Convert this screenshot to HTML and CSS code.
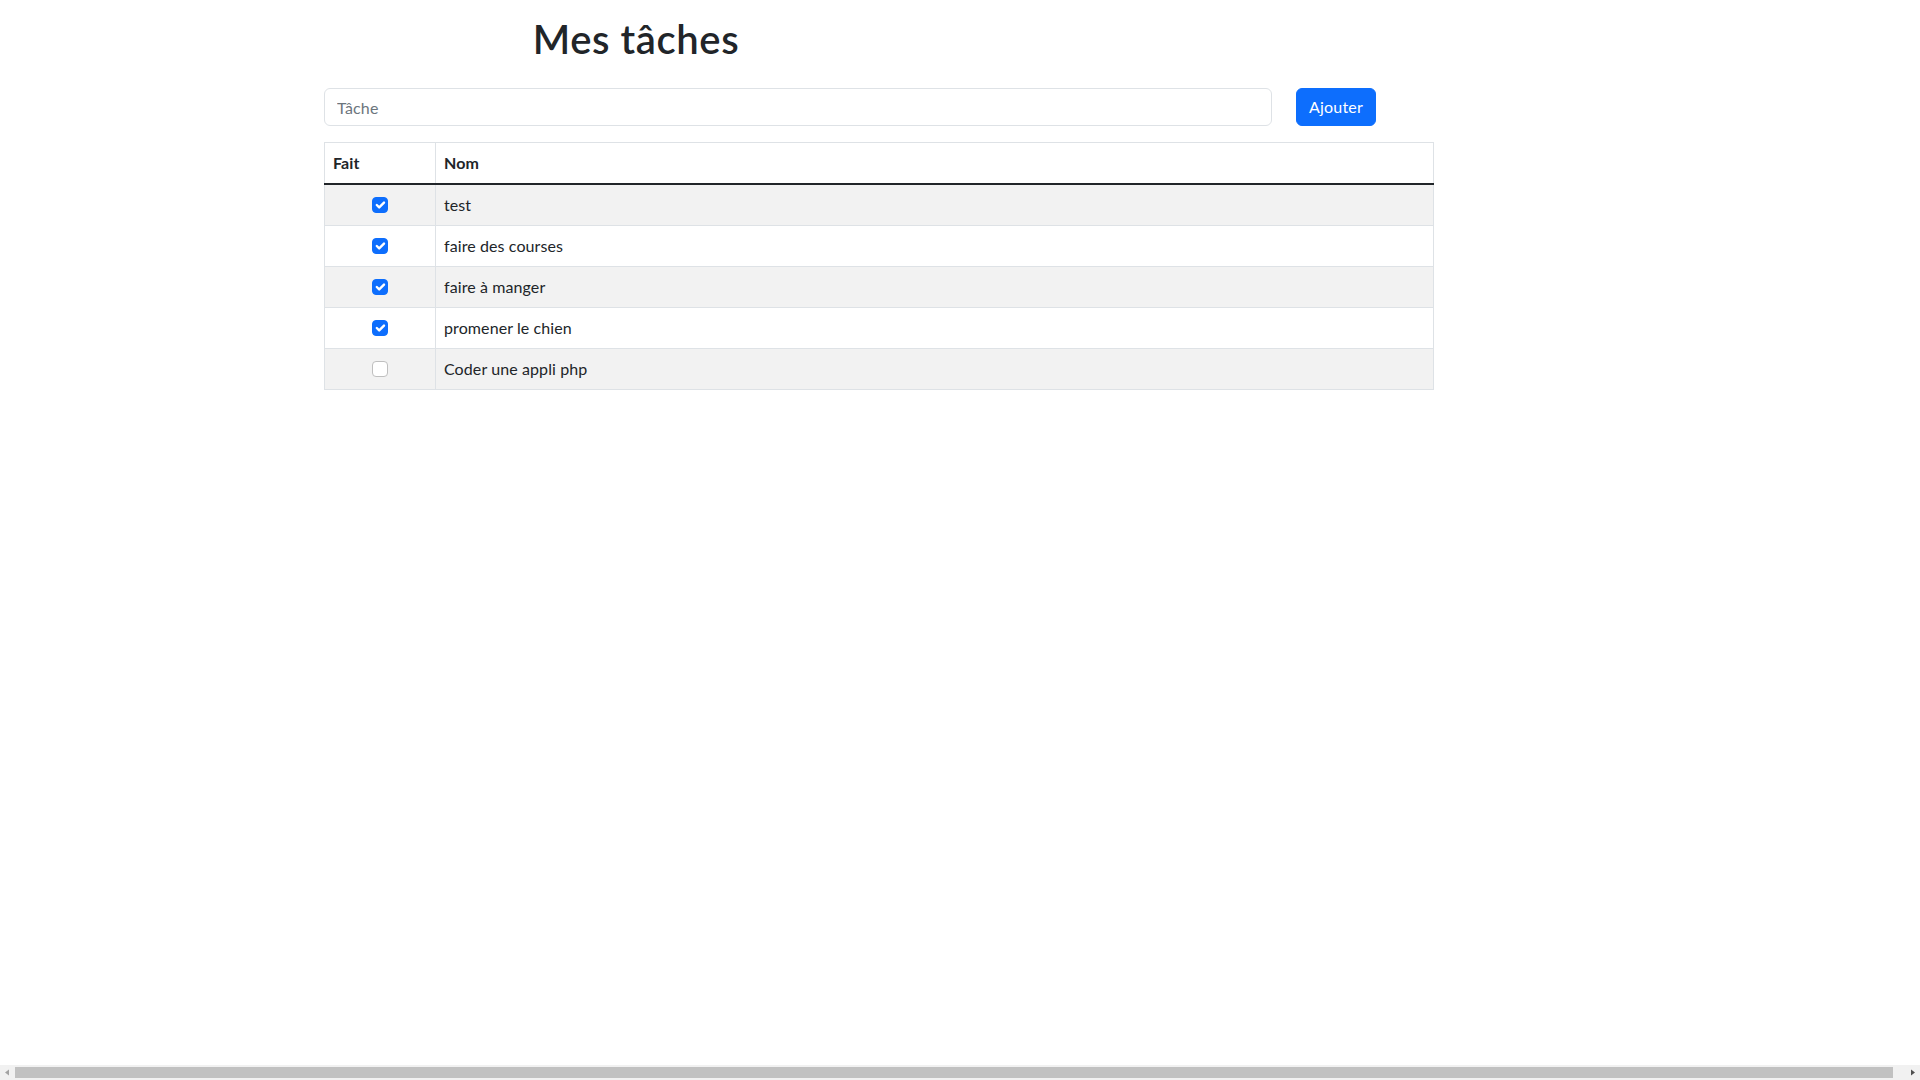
FILE: index.html
```html
<!DOCTYPE html>
<html lang="fr">
<head>
<meta charset="utf-8">
<title>Mes tâches</title>
<link rel="stylesheet" href="styles.css">
</head>
<body>
<div class="row title-row">
  <div class="col col-4 offset-2">
    <h1 class="title">Mes tâches</h1>
  </div>
</div>
<form class="row form-row">
  <div class="col col-6 offset-2">
    <input class="form-control" type="text" placeholder="Tâche">
  </div>
  <div class="col col-auto">
    <button class="btn" type="button">Ajouter</button>
  </div>
</form>
<div class="row">
  <div class="col col-7 offset-2">
    <table class="table">
      <thead>
        <tr><th class="c-done">Fait</th><th>Nom</th></tr>
      </thead>
      <tbody>
        <tr class="odd"><td class="c-done"><span class="check on"><svg viewBox="0 0 20 20" width="16" height="16"><path d="m6 10 3 3 6-6" fill="none" stroke="#fff" stroke-width="3" stroke-linecap="round" stroke-linejoin="round"/></svg></span></td><td>test</td></tr>
        <tr><td class="c-done"><span class="check on"><svg viewBox="0 0 20 20" width="16" height="16"><path d="m6 10 3 3 6-6" fill="none" stroke="#fff" stroke-width="3" stroke-linecap="round" stroke-linejoin="round"/></svg></span></td><td>faire des courses</td></tr>
        <tr class="odd"><td class="c-done"><span class="check on"><svg viewBox="0 0 20 20" width="16" height="16"><path d="m6 10 3 3 6-6" fill="none" stroke="#fff" stroke-width="3" stroke-linecap="round" stroke-linejoin="round"/></svg></span></td><td>faire à manger</td></tr>
        <tr><td class="c-done"><span class="check on"><svg viewBox="0 0 20 20" width="16" height="16"><path d="m6 10 3 3 6-6" fill="none" stroke="#fff" stroke-width="3" stroke-linecap="round" stroke-linejoin="round"/></svg></span></td><td>promener le chien</td></tr>
        <tr class="odd"><td class="c-done"><span class="check"></span></td><td>Coder une appli php</td></tr>
      </tbody>
    </table>
  </div>
</div>
<div class="hscroll" aria-hidden="true">
  <span class="arrow left"><svg width="15" height="15" viewBox="0 0 15 15"><path d="M5 7.5 9 4.5v6z" fill="#a3a3a3"/></svg></span>
  <span class="track"><span class="thumb"></span></span>
  <span class="arrow right"><svg width="15" height="15" viewBox="0 0 15 15"><path d="M10 7.5 6 4.5v6z" fill="#505050"/></svg></span>
</div>
</body>
</html>
```
FILE: styles.css
```css
* { box-sizing: border-box; }
html, body {
  margin: 0;
  padding: 0;
  background: #fff;
}
body {
  font-family: Lato, "Open Sans", sans-serif;
  font-size: 16px;
  line-height: 24px;
  letter-spacing: 0.1px;
  color: #212529;
}
.row {
  display: flex;
  margin-left: -12px;
  margin-right: -12px;
}
.col {
  padding-left: 12px;
  padding-right: 12px;
}
.col-4 { flex: 0 0 calc(100% / 12 * 4); }
.col-6 { flex: 0 0 calc(100% / 12 * 6); }
.col-7 { flex: 0 0 calc(100% / 12 * 7); }
.col-auto { flex: 0 0 auto; }
.offset-2 { margin-left: calc(100% / 12 * 2); }

.title-row { padding-top: 15px; }
.title {
  margin: 0;
  font-size: 40px;
  line-height: 48px;
  font-weight: 600;
  letter-spacing: 0.6px;
  text-align: center;
}
.form-row { margin-top: 25px; }
.form-control {
  display: block;
  width: 100%;
  height: 38px;
  padding: 6px 12px;
  font: inherit;
  letter-spacing: inherit;
  color: #212529;
  border: 1px solid #dee2e6;
  border-radius: 6px;
  background: #fff;
  outline: none;
}
.form-control::placeholder { color: #6c757d; }
.btn {
  display: block;
  height: 38px;
  padding: 6px 12px;
  font: inherit;
  letter-spacing: 0.2px;
  color: #fff;
  background: #0d6efd;
  border: 1px solid #0d6efd;
  border-radius: 6px;
}
.table {
  margin-top: 16px;
  width: 100%;
  border-collapse: collapse;
  border: 1px solid #dee2e6;
}
.table th, .table td {
  padding: 8px;
  border: 1px solid #dee2e6;
  text-align: left;
  vertical-align: top;
}
.table th { font-weight: 700; }
.table tbody tr:first-child td { border-top: 2px solid #212529; }
.table tr.odd td { background: #f2f2f2; }
.table .c-done { width: 111px; }
.table td.c-done { text-align: center; }
.check {
  display: inline-block;
  width: 16px;
  height: 16px;
  margin-top: 4px;
  vertical-align: top;
  border: 1px solid #bfbfbf;
  border-radius: 4px;
  background: #fff;
  position: relative;
}
.check svg {
  position: absolute;
  left: -1px;
  top: -1px;
}
.check.on {
  background: #0d6efd;
  border-color: #0d6efd;
}

.hscroll {
  position: fixed;
  left: 0;
  right: 0;
  bottom: 0;
  height: 15px;
  display: flex;
  background: #f1f1f1;
}
.hscroll .arrow {
  flex: 0 0 15px;
  height: 15px;
  display: block;
}
.hscroll .arrow svg { display: block; }
.hscroll .track {
  flex: 1;
  padding: 2px 0;
  display: flex;
}
.hscroll .thumb {
  display: block;
  width: calc(100% - 12px);
  height: 11px;
  background: #c1c1c1;
}
```
